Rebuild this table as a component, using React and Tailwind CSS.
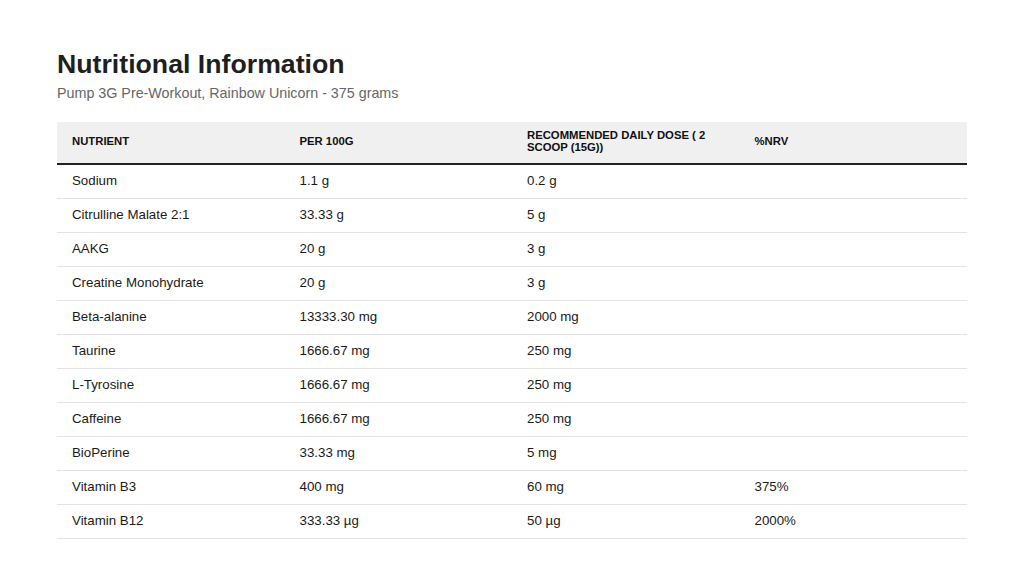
const rows = [
  ['Sodium', '1.1 g', '0.2 g', ''],
  ['Citrulline Malate 2:1', '33.33 g', '5 g', ''],
  ['AAKG', '20 g', '3 g', ''],
  ['Creatine Monohydrate', '20 g', '3 g', ''],
  ['Beta-alanine', '13333.30 mg', '2000 mg', ''],
  ['Taurine', '1666.67 mg', '250 mg', ''],
  ['L-Tyrosine', '1666.67 mg', '250 mg', ''],
  ['Caffeine', '1666.67 mg', '250 mg', ''],
  ['BioPerine', '33.33 mg', '5 mg', ''],
  ['Vitamin B3', '400 mg', '60 mg', '375%'],
  ['Vitamin B12', '333.33 µg', '50 µg', '2000%'],
];

const headers = ['Nutrient', 'Per 100g', 'Recommended daily dose ( 2 scoop (15g))', '%NRV'];

export default function App() {
  return (
    <div className="min-h-screen bg-white font-['Liberation_Sans',Arial,sans-serif] text-[#1a1a1a]">
      <div className="px-[57px] pt-[48px]">
        <h1 className="text-[26.7px] font-bold leading-[33px] text-[#1f1f1f]">Nutritional Information</h1>
        <p className="mt-[2px] text-[14.3px] leading-[20px] text-[#666666]">
          Pump 3G Pre-Workout, Rainbow Unicorn - 375 grams
        </p>

        <table className="mt-[19px] w-full table-fixed border-collapse">
          <thead>
            <tr className="h-[42px] bg-[#f0f0f0] border-b-2 border-[#222222]">
              {headers.map((h) => (
                <th
                  key={h}
                  className="px-[15px] pb-[3px] text-left align-middle text-[11.3px] font-bold uppercase leading-[12px] text-[#111111]"
                >
                  {h}
                </th>
              ))}
            </tr>
          </thead>
          <tbody>
            {rows.map((r) => (
              <tr key={r[0]} className="h-[34px] border-b border-[#e3e3e3]">
                {r.map((c, i) => (
                  <td key={i} className="px-[15px] pb-[1px] align-middle text-[13.3px] leading-[18px]">
                    {c}
                  </td>
                ))}
              </tr>
            ))}
          </tbody>
        </table>
      </div>
    </div>
  );
}
